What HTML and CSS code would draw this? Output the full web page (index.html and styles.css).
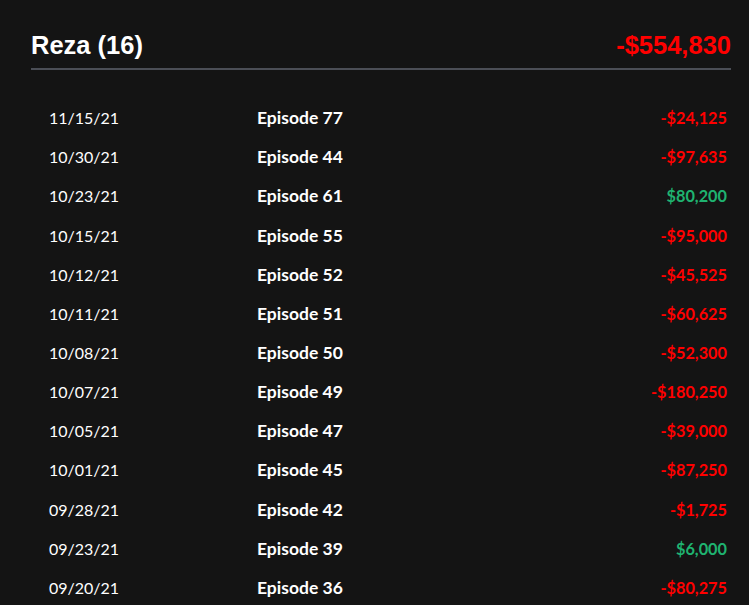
FILE: index.html
```html
<!DOCTYPE html>
<html>
<head>
<meta charset="utf-8">
<link rel="stylesheet" href="styles.css">
</head>
<body>
<div class="panel">
  <div class="head">
    <h1 class="name">Reza (16)</h1>
    <div class="total neg">-$554,830</div>
  </div>
  <div class="rows">
    <div class="row"><span class="date">11/15/21</span><span class="ep">Episode 77</span><span class="amt neg">-$24,125</span></div>
    <div class="row"><span class="date">10/30/21</span><span class="ep">Episode 44</span><span class="amt neg">-$97,635</span></div>
    <div class="row"><span class="date">10/23/21</span><span class="ep">Episode 61</span><span class="amt pos">$80,200</span></div>
    <div class="row"><span class="date">10/15/21</span><span class="ep">Episode 55</span><span class="amt neg">-$95,000</span></div>
    <div class="row"><span class="date">10/12/21</span><span class="ep">Episode 52</span><span class="amt neg">-$45,525</span></div>
    <div class="row"><span class="date">10/11/21</span><span class="ep">Episode 51</span><span class="amt neg">-$60,625</span></div>
    <div class="row"><span class="date">10/08/21</span><span class="ep">Episode 50</span><span class="amt neg">-$52,300</span></div>
    <div class="row"><span class="date">10/07/21</span><span class="ep">Episode 49</span><span class="amt neg">-$180,250</span></div>
    <div class="row"><span class="date">10/05/21</span><span class="ep">Episode 47</span><span class="amt neg">-$39,000</span></div>
    <div class="row"><span class="date">10/01/21</span><span class="ep">Episode 45</span><span class="amt neg">-$87,250</span></div>
    <div class="row"><span class="date">09/28/21</span><span class="ep">Episode 42</span><span class="amt neg">-$1,725</span></div>
    <div class="row"><span class="date">09/23/21</span><span class="ep">Episode 39</span><span class="amt pos">$6,000</span></div>
    <div class="row"><span class="date">09/20/21</span><span class="ep">Episode 36</span><span class="amt neg">-$80,275</span></div>
  </div>
</div>
</body>
</html>
```

FILE: styles.css
```css
html, body {
  margin: 0;
  padding: 0;
  background: #141414;
  overflow: hidden;
}
.panel {
  padding: 30px 18px 0 31px;
}
.head {
  display: flex;
  justify-content: space-between;
  align-items: baseline;
  border-bottom: 2px solid #4b4e56;
  padding-bottom: 8px;
}
.name {
  margin: 0;
  font-family: "Liberation Sans", Arial, sans-serif;
  font-weight: bold;
  font-size: 25.5px;
  line-height: 30px;
  color: #ffffff;
}
.total {
  font-family: "Liberation Sans", Arial, sans-serif;
  font-weight: bold;
  font-size: 25.5px;
  line-height: 30px;
}
.rows {
  padding: 28px 4px 0 18px;
}
.row {
  display: grid;
  grid-template-columns: 208px 1fr auto;
  align-items: center;
  height: 39.17px;
  font-family: Lato, "Open Sans", sans-serif;
}
.date {
  color: #ffffff;
  font-weight: normal;
  font-size: 16px;
}
.ep {
  color: #ffffff;
  font-weight: bold;
  font-size: 17.5px;
}
.amt {
  font-weight: bold;
  text-align: right;
  font-size: 16.3px;
}
.neg { color: #ff0000; }
.pos { color: #1fb370; }
```
